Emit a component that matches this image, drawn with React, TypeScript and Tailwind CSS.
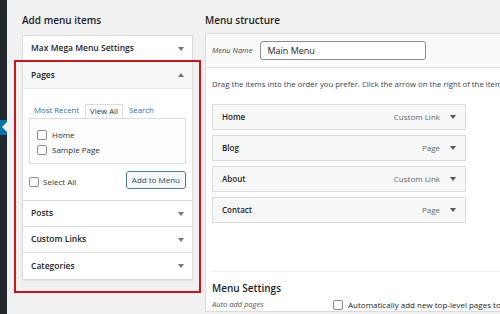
const font = { fontFamily: '"Open Sans", "Noto Sans", sans-serif' };

function Caret({ up = false, color = "#72777c" }: { up?: boolean; color?: string }) {
  return (
    <svg width="6" height="4" viewBox="0 0 6 4" className="shrink-0">
      {up ? <path d="M0 4 L3 0 L6 4 Z" fill={color} /> : <path d="M0 0 L3 4 L6 0 Z" fill={color} />}
    </svg>
  );
}

function Box({ className = "" }: { className?: string }) {
  return <span className={`inline-block h-[10px] w-[10px] shrink-0 rounded-[2px] border border-[#8c8f94] bg-white ${className}`} />;
}

const sections = ["Posts", "Custom Links", "Categories"];

const items = [
  { name: "Home", type: "Custom Link" },
  { name: "Blog", type: "Page" },
  { name: "About", type: "Custom Link" },
  { name: "Contact", type: "Page" },
];

export default function App() {
  return (
    <div className="relative flex h-[314px] w-[500px] overflow-hidden bg-[#f1f1f1] text-[#1d2327]" style={font}>
      {/* admin sidebar edge */}
      <div className="relative w-[7px] shrink-0 bg-[#23282d]">
        <div className="absolute left-0 top-[120px] h-[15px] w-[7px] bg-[#0073aa]" />
        <div className="absolute left-[2px] top-[122px] h-0 w-0 border-y-[5px] border-r-[5px] border-y-transparent border-r-[#f1f1f1]" />
      </div>

      <div className="flex flex-1 gap-[12px] pl-[15px] pt-[11px]">
        {/* Add menu items */}
        <div className="relative w-[171px] shrink-0">
          <h2 className="mb-[6px] text-[10px] font-semibold leading-[18px]">Add menu items</h2>
          <div className="border border-[#dcdcde] bg-white shadow-[0_1px_1px_rgba(0,0,0,0.06)]">
            <div className="flex h-[26px] items-center justify-between border-b border-[#dcdcde] px-[8px]">
              <span className="text-[8.5px] font-semibold">Max Mega Menu Settings</span>
              <Caret />
            </div>
            <div className="flex h-[27px] items-center justify-between border-b border-[#e8e8e8] bg-[#f6f7f7] px-[8px]">
              <span className="text-[8.5px] font-semibold">Pages</span>
              <Caret up />
            </div>
            <div className="border-b border-[#dcdcde] px-[6px] pb-[11px] pt-[15px] text-[7.8px] text-[#2c3338]">
              <div className="flex h-[14px] items-end pl-[5px]">
                <span className="pb-[1px] text-[#2271b1]">Most Recent</span>
                <span className="ml-[6px] flex h-[14px] items-center border border-b-0 border-[#dcdcde] bg-[#fdfdfd] px-[4px]">View All</span>
                <span className="ml-[6px] pb-[1px] text-[#2271b1]">Search</span>
              </div>
              <div className="flex h-[46px] flex-col gap-[5px] border border-[#dcdcde] bg-[#fdfdfd] px-[7px] pt-[11px] text-[8px]">
                <label className="flex h-[10px] items-center gap-[5px]"><Box />Home</label>
                <label className="flex h-[10px] items-center gap-[5px]"><Box />Sample Page</label>
              </div>
              <div className="mt-[7px] flex h-[18px] items-center justify-between text-[8px]">
                <label className="mt-[4px] flex items-center gap-[4px]"><Box />Select All</label>
                <button className="h-[18px] rounded-[3px] border border-[#4f7f8f] bg-[#f6f7f7] px-[5px] text-[8px] text-[#2a5566]">Add to Menu</button>
              </div>
            </div>
            {sections.map((s, i) => (
              <div
                key={s}
                className={`flex h-[26px] items-center justify-between px-[8px] ${i < sections.length - 1 ? "border-b border-[#dcdcde]" : ""}`}
              >
                <span className="text-[8.5px] font-semibold">{s}</span>
                <Caret />
              </div>
            ))}
          </div>
          {/* highlight */}
          <div className="pointer-events-none absolute left-[-8px] top-[49px] h-[233px] w-[187px] border-2 border-[#d0121b]" />
        </div>

        {/* Menu structure */}
        <div className="min-w-0 flex-1">
          <h2 className="mb-[4px] text-[10px] font-semibold leading-[18px]">Menu structure</h2>
          <div className="border border-r-0 border-[#dcdcde] bg-white">
            <div className="flex h-[34px] items-center gap-[8px] border-b border-[#dcdcde] bg-[#fafafa] px-[6px]">
              <span className="text-[7.5px] italic text-[#3c434a]">Menu Name</span>
              <div className="flex h-[19px] w-[166px] items-center rounded-[3px] border border-[#8c8f94] bg-white px-[6px] text-[9px]">
                Main Menu
              </div>
            </div>
            <div className="h-[203px] overflow-hidden px-[6px] pt-[10px]">
              <p className="whitespace-nowrap text-[7.8px] leading-[12px] text-[#3c434a]">
                Drag the items into the order you prefer. Click the arrow on the right of the item to reveal additional configuration options.
              </p>
              <div className="mt-[14px] flex w-[254px] flex-col gap-[5px]">
                {items.map((it) => (
                  <div key={it.name} className="flex h-[26px] items-center justify-between border border-[#dcdcde] bg-[#f6f7f7] pl-[9px] pr-[9px]">
                    <span className="text-[8px] font-semibold">{it.name}</span>
                    <span className="flex items-center gap-[10px] text-[8px] text-[#646970]">
                      {it.type}
                      <Caret color="#50575e" />
                    </span>
                  </div>
                ))}
              </div>
            </div>
            <div className="ml-[6px] border-t border-[#f0f0f1] pt-[8px]">
              <h3 className="text-[10px] font-semibold leading-[16px]">Menu Settings</h3>
              <div className="mt-[3px] flex items-center overflow-hidden">
                <span className="w-[121px] shrink-0 text-[7.5px] italic text-[#50575e]">Auto add pages</span>
                <Box />
                <span className="ml-[5px] whitespace-nowrap text-[8px]">Automatically add new top-level pages to this menu</span>
              </div>
            </div>
          </div>
        </div>
      </div>
    </div>
  );
}
